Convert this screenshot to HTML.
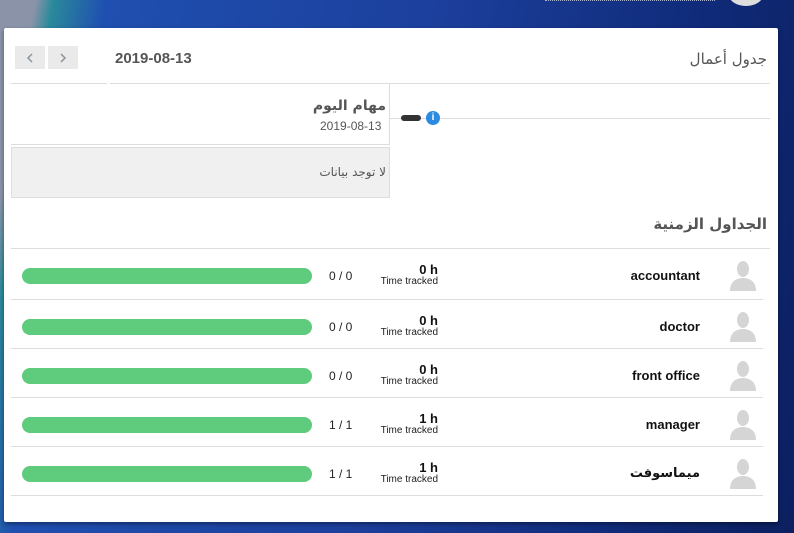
<!DOCTYPE html>
<html><head><meta charset="utf-8"><style>
*{margin:0;padding:0;box-sizing:border-box}
body{width:794px;height:533px;overflow:hidden;position:relative;font-family:"Liberation Sans","DejaVu Sans",sans-serif;background:linear-gradient(100deg,#8a93a8 0,#8a93a8 4%,#2a8a9a 6%,#1f4fb0 12%,#1c3f9c 50%,#0f2a78 80%,#0c2060 100%)}
.card{position:absolute;left:4px;top:28px;width:774px;height:494px;background:#fff;border-radius:2px;box-shadow:0 2px 4px rgba(0,0,0,.4)}
.abs{position:absolute}
.r{text-align:right;direction:rtl}
.btn{position:absolute;top:18px;width:30px;height:23px;background:#eaeaea}
.btn svg{position:absolute;left:11px;top:7px}
.hl{position:absolute;height:1px;background:#ddd}
.row{position:absolute;left:7px;width:752px;height:49px;border-bottom:1px solid #ddd}
.bar{position:absolute;left:11px;top:19px;width:290px;height:16px;border-radius:8px;background:#5ecb7d}
.ratio{position:absolute;left:318px;top:20px;font-size:12px;color:#222}
.hrs{position:absolute;right:325px;top:14px;text-align:right;font-size:13px;font-weight:bold;color:#111;line-height:13px}
.hrs small{display:block;font-size:10px;font-weight:normal;color:#222;line-height:11px}
.nm{position:absolute;right:63px;top:19px;font-size:13px;font-weight:bold;color:#111;direction:rtl}
.av{position:absolute;right:6px;top:10px;width:28px;height:32px}
</style></head><body>
<div class="abs" style="left:545px;top:0;width:170px;height:2px;border-top:1px dotted #aab4cc"></div>
<div class="abs" style="left:728px;top:-20px;width:36px;height:26px;border-radius:50%;background:#ddd"></div>
<div class="card">
 <div class="btn" style="left:11px"><svg width="8" height="10" viewBox="0 0 8 10"><path d="M6 1L2 5L6 9" stroke="#8a94a0" stroke-width="1.5" fill="none"/></svg></div>
 <div class="btn" style="left:44px"><svg width="8" height="10" viewBox="0 0 8 10"><path d="M2 1L6 5L2 9" stroke="#8a94a0" stroke-width="1.5" fill="none"/></svg></div>
 <div class="abs" style="left:111px;top:22px;font-size:15px;font-weight:bold;color:#555">2019-08-13</div>
 <div class="abs r" style="right:11px;top:22px;font-size:15px;color:#555;font-family:'DejaVu Sans',sans-serif">جدول أعمال</div>
 <div class="hl" style="left:7px;top:55px;width:96px"></div>
 <div class="hl" style="left:106px;top:55px;width:278px"></div>
 <div class="hl" style="left:384px;top:55px;width:382px"></div>
 <div class="abs" style="left:385px;top:56px;width:1px;height:61px;background:#ddd"></div>
 <div class="abs" style="left:7px;top:116px;width:379px;height:1px;background:#ddd"></div>
 <div class="abs r" style="right:392px;top:70px;font-size:14px;font-weight:bold;color:#555;font-family:'DejaVu Sans',sans-serif">مهام اليوم</div>
 <div class="abs" style="left:316px;top:91px;font-size:12px;color:#555">2019-08-13</div>
 <div class="hl" style="left:386px;top:90px;width:380px"></div>
 <div class="abs" style="left:397px;top:87px;width:20px;height:6px;border-radius:3px;background:#333"></div>
 <div class="abs" style="left:422px;top:83px;width:14px;height:14px;border-radius:50%;background:#2a8be0;color:#fff;font-size:10px;font-weight:bold;text-align:center;line-height:14px">i</div>
 <div class="abs" style="left:7px;top:119px;width:379px;height:51px;background:#f0f0f0;border:1px solid #ddd"></div>
 <div class="abs r" style="right:392px;top:137px;font-size:12px;color:#555;font-family:'DejaVu Sans',sans-serif">لا توجد بيانات</div>
 <div class="abs r" style="right:11px;top:187px;font-size:15px;font-weight:bold;color:#555;font-family:'DejaVu Sans',sans-serif">الجداول الزمنية</div>
 <div class="hl" style="left:7px;top:220px;width:759px"></div>
 <div class="row" style="top:221px;height:51px"><div class="bar" style="top:19px"></div><div class="ratio">0 / 0</div><div class="hrs">0 h<small>Time tracked</small></div><div class="nm">accountant</div><svg class="av" viewBox="0 0 28 32"><ellipse cx="14" cy="10" rx="6" ry="8" fill="#d5d5d5"/><path d="M1 32C1 22 8 19 14 19S27 22 27 32Z" fill="#d5d5d5"/></svg></div>
 <div class="row" style="top:272px"><div class="bar"></div><div class="ratio">0 / 0</div><div class="hrs">0 h<small>Time tracked</small></div><div class="nm">doctor</div><svg class="av" viewBox="0 0 28 32"><ellipse cx="14" cy="10" rx="6" ry="8" fill="#d5d5d5"/><path d="M1 32C1 22 8 19 14 19S27 22 27 32Z" fill="#d5d5d5"/></svg></div>
 <div class="row" style="top:321px"><div class="bar"></div><div class="ratio">0 / 0</div><div class="hrs">0 h<small>Time tracked</small></div><div class="nm">front office</div><svg class="av" viewBox="0 0 28 32"><ellipse cx="14" cy="10" rx="6" ry="8" fill="#d5d5d5"/><path d="M1 32C1 22 8 19 14 19S27 22 27 32Z" fill="#d5d5d5"/></svg></div>
 <div class="row" style="top:370px"><div class="bar"></div><div class="ratio">1 / 1</div><div class="hrs">1 h<small>Time tracked</small></div><div class="nm">manager</div><svg class="av" viewBox="0 0 28 32"><ellipse cx="14" cy="10" rx="6" ry="8" fill="#d5d5d5"/><path d="M1 32C1 22 8 19 14 19S27 22 27 32Z" fill="#d5d5d5"/></svg></div>
 <div class="row" style="top:419px"><div class="bar"></div><div class="ratio">1 / 1</div><div class="hrs">1 h<small>Time tracked</small></div><div class="nm" style="font-family:'DejaVu Sans',sans-serif">ميماسوفت</div><svg class="av" viewBox="0 0 28 32"><ellipse cx="14" cy="10" rx="6" ry="8" fill="#d5d5d5"/><path d="M1 32C1 22 8 19 14 19S27 22 27 32Z" fill="#d5d5d5"/></svg></div>
</div>
</body></html>
